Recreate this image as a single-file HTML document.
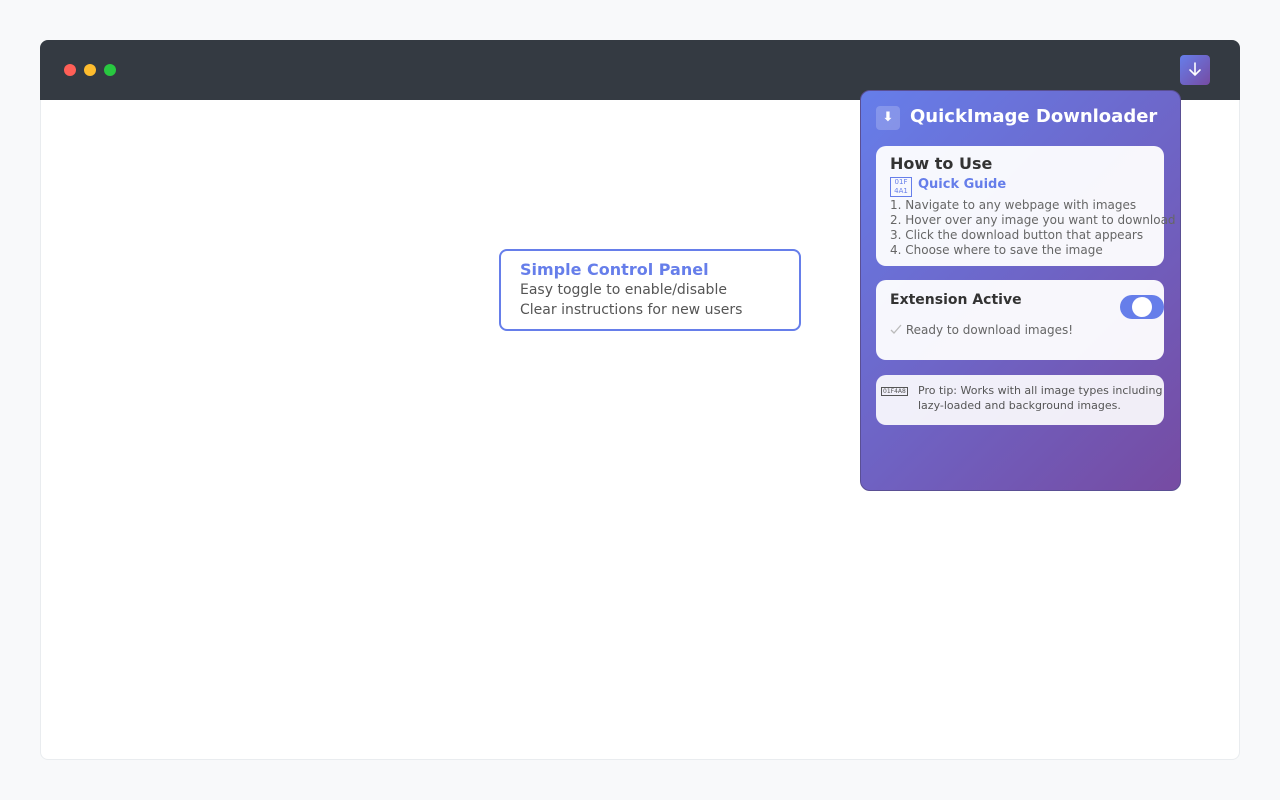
<!DOCTYPE html>
<html><head><meta charset="utf-8"><style>
*{box-sizing:border-box;margin:0;padding:0}
body{width:1280px;height:800px;background:#f8f9fa;font-family:"DejaVu Sans","Liberation Sans",sans-serif;position:relative;overflow:hidden}
.win{position:absolute;left:40px;top:40px;width:1200px;height:720px;background:#fff;border:1px solid #e9ecef;border-radius:8px}
.bar{position:absolute;left:40px;top:40px;width:1200px;height:60px;background:#343a42;border-radius:8px 8px 0 0}
.dot{position:absolute;top:24px;width:12px;height:12px;border-radius:50%}
.ext{position:absolute;left:1140px;top:15px;width:30px;height:30px;border-radius:4px;background:linear-gradient(135deg,#667eea,#764ba2)}
.call{position:absolute;left:499px;top:249px;width:302px;height:82px;border:2px solid #667eea;border-radius:8px;background:#fff;padding:8px 19px}
.call b{display:block;color:#667eea;font-size:16px;line-height:21px}
.call div{color:#555;font-size:14px;line-height:20px}
.pop{position:absolute;left:860px;top:90px;width:321px;height:401px;border-radius:10px;border:1px solid #5a4f94;background:linear-gradient(135deg,#667eea 0%,#764ba2 100%)}
.ic{position:absolute;left:15px;top:15px;width:24px;height:24px;border-radius:4px;background:rgba(255,255,255,.2);color:#fff;font-size:13px;text-align:center;line-height:24px;font-weight:bold}
.tt{position:absolute;left:49px;top:15px;color:#fff;font-size:18px;font-weight:bold;white-space:nowrap}
.card{position:absolute;left:15px;width:288px;background:rgba(255,255,255,.95);border-radius:10px}
</style></head><body>
<div class="win"></div>
<div class="bar">
<div class="dot" style="left:24px;background:#ff5f57"></div>
<div class="dot" style="left:44px;background:#febc2e"></div>
<div class="dot" style="left:64px;background:#28c840"></div>
<div class="ext"><svg width="30" height="30" viewBox="0 0 30 30"><path d="M15 8v12M10 15l5 5 5-5" stroke="#fff" stroke-width="1.6" fill="none" stroke-linecap="round"/></svg></div>
</div>
<div class="call"><b>Simple Control Panel</b><div>Easy toggle to enable/disable</div><div>Clear instructions for new users</div></div>
<div class="pop">
<div class="ic">⬇</div>
<div class="tt">QuickImage Downloader</div>
<div class="card" style="top:55px;height:120px;padding:8px 14px;overflow:visible">
<div style="font-size:16px;font-weight:bold;color:#333;line-height:20px">How to Use</div>
<div style="font-size:13px;font-weight:bold;color:#667eea;line-height:20px;white-space:nowrap;margin-top:1px"><span style="display:inline-block;border:1px solid #667eea;font-size:7px;line-height:9px;width:22px;height:20px;vertical-align:-5px;text-align:center;font-weight:normal;margin-right:6px">01F<br>4A1</span>Quick Guide</div>
<div style="font-size:12px;color:#666;line-height:15px;white-space:nowrap;margin-top:1px">1. Navigate to any webpage with images<br>2. Hover over any image you want to download<br>3. Click the download button that appears<br>4. Choose where to save the image</div>
</div>
<div class="card" style="top:189px;height:80px;padding:12px 14px">
<div style="font-size:14px;font-weight:bold;color:#333">Extension Active</div>
<div style="font-size:12px;color:#666;margin-top:15px;white-space:nowrap"><svg width="12" height="10" viewBox="0 0 12 10" style="vertical-align:0"><path d="M1 6l3 3 7-8" stroke="#bbb" stroke-width="1.3" fill="none"/></svg> Ready to download images!</div>
<div style="position:absolute;left:244px;top:15px;width:44px;height:24px;border-radius:12px;background:#667eea"><div style="position:absolute;left:12px;top:2px;width:20px;height:20px;border-radius:50%;background:#fff"></div></div>
</div>
<div class="card" style="top:284px;height:50px;background:rgba(255,255,255,.9);padding:8px 0 0 42px;font-size:11px;color:#555;line-height:15px;white-space:nowrap">
<span style="position:absolute;left:5px;top:12px;border:1px solid #555;font-size:6px;line-height:7px;padding:0 1px">01F4A8</span>Pro tip: Works with all image types including<br>lazy-loaded and background images.</div>
</div>
</body></html>
